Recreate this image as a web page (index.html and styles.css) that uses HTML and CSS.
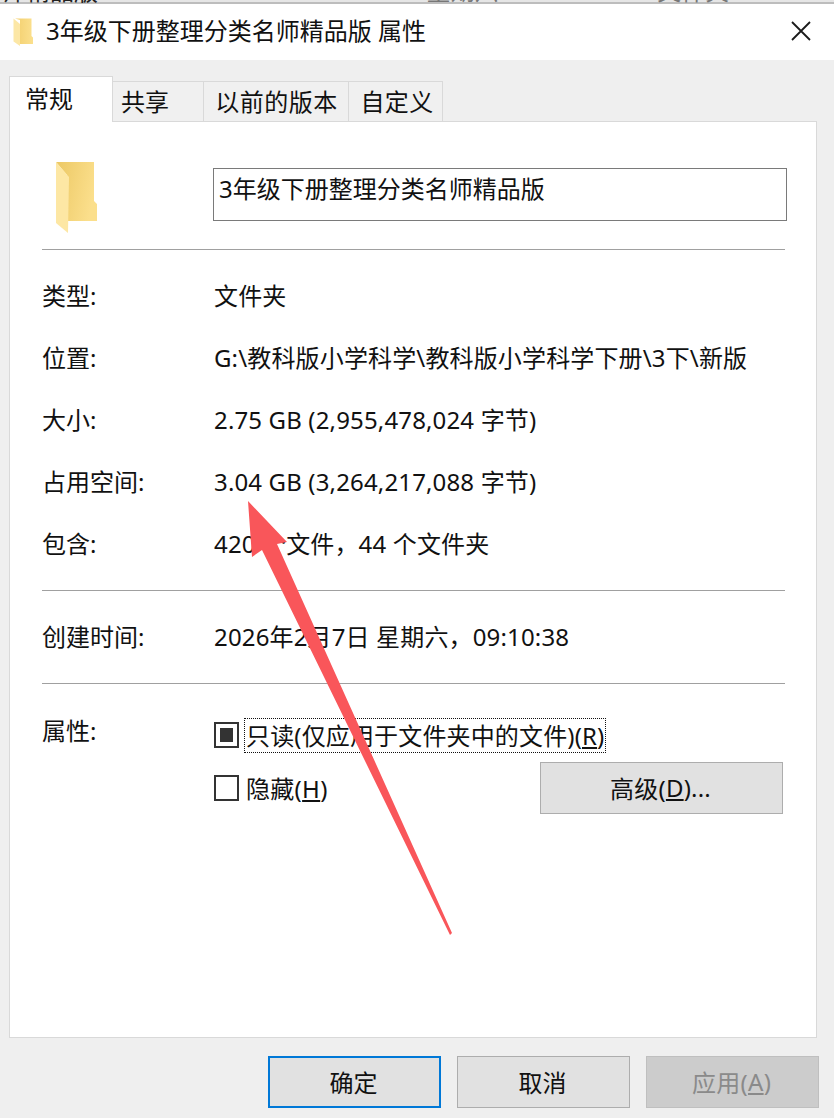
FILE: index.html
```html
<!DOCTYPE html>
<html lang="zh-CN">
<head>
<meta charset="utf-8">
<title>3年级下册整理分类名师精品版 属性</title>
<link rel="stylesheet" href="styles.css">
</head>
<body>
<div class="window">
  <div class="behind"><span class="behind-a">师精品版</span><span class="behind-b">2026/2/7 星期六 9:10</span><span class="behind-d">文件夹</span></div>
  <header class="titlebar">
    <svg class="title-icon" width="20" height="28" viewBox="0 0 40 56">
      <defs>
        <linearGradient id="b1" x1="0" y1="0" x2="1" y2="0"><stop offset="0" stop-color="#f3cf6e"/><stop offset="1" stop-color="#fbe08e"/></linearGradient>
      </defs>
      <path d="M4 1H37V36L40 39V52H14V4Z" fill="url(#b1)"/>
      <path d="M1 1L14 12V56L1 47Z" fill="#fce7a6"/>
    </svg>
    <span class="title-text">3年级下册整理分类名师精品版 属性</span>
    <svg class="close" width="20" height="20" viewBox="0 0 20 20"><path d="M1 1L19 19M19 1L1 19" stroke="#1a1a1a" stroke-width="1.8" fill="none"/></svg>
  </header>
  <main class="body">
    <nav class="tabs">
      <span class="tab tab-active">常规</span>
      <span class="tab tab-share">共享</span>
      <span class="tab tab-prev">以前的版本</span>
      <span class="tab tab-custom">自定义</span>
    </nav>
    <section class="panel">
      <div class="head">
        <svg class="big-folder" width="46" height="74" viewBox="0 0 46 74">
          <defs>
            <linearGradient id="b2" x1="0" y1="0" x2="1" y2="0.3"><stop offset="0" stop-color="#ecc864"/><stop offset="1" stop-color="#fbdf8c"/></linearGradient>
          </defs>
          <path d="M1 1H39V40L42 43V60H12V14Z" fill="url(#b2)"/>
          <path d="M1 1L14 16L13 72L1 62Z" fill="#fde7a4"/>
        </svg>
        <div class="name">3年级下册整理分类名师精品版</div>
      </div>
      <hr class="sep">
      <div class="rows">
        <div class="row"><span class="label">类型:</span><span class="value">文件夹</span></div>
        <div class="row"><span class="label">位置:</span><span class="value">G:\教科版小学科学\教科版小学科学下册\3下\新版</span></div>
        <div class="row"><span class="label">大小:</span><span class="value">2.75 GB (2,955,478,024 字节)</span></div>
        <div class="row"><span class="label">占用空间:</span><span class="value">3.04 GB (3,264,217,088 字节)</span></div>
        <div class="row"><span class="label">包含:</span><span class="value">420 个文件，44 个文件夹</span></div>
      </div>
      <hr class="sep sep-mid">
      <div class="row row-single"><span class="label">创建时间:</span><span class="value">2026年2月7日 星期六，09:10:38</span></div>
      <hr class="sep">
      <div class="attrs">
        <span class="label attr-label">属性:</span>
        <div class="attr-body">
          <div class="check-line">
            <span class="box box-mixed"></span>
            <span class="focus">只读(仅应用于文件夹中的文件)(<u>R</u>)</span>
          </div>
          <div class="check-line check-second">
            <span class="box"></span>
            <span class="check-text">隐藏(<u>H</u>)</span>
            <span class="btn btn-adv">高级(<u>D</u>)...</span>
          </div>
        </div>
      </div>
    </section>
    <footer class="actions">
      <span class="btn btn-foot btn-default">确定</span>
      <span class="btn btn-foot">取消</span>
      <span class="btn btn-foot btn-disabled">应用(<u>A</u>)</span>
    </footer>
  </main>
  <svg class="arrow" width="834" height="1118" viewBox="0 0 834 1118">
    <path d="M248 501L287 542L277 544L452 933L450 935L262 550L252 557Z" fill="#f9565a"/>
  </svg>
</div>
</body>
</html>
```
FILE: styles.css
```css
* { box-sizing: border-box; }
html, body { margin: 0; padding: 0; }
body {
  width: 834px;
  height: 1118px;
  overflow: hidden;
  background: #efefef;
  font-family: "Noto Sans", "Noto Sans CJK SC", sans-serif;
  font-size: 24px;
  color: #111;
}
.window { position: relative; width: 834px; height: 1118px; display: flex; flex-direction: column; }
.behind {
  height: 4px;
  background: linear-gradient(#e6e6e6 0, #e6e6e6 2px, #bdbdbd 2px, #bdbdbd 4px);
  overflow: hidden;
  display: flex;
  color: #777;
  white-space: nowrap;
}
.behind span { display: block; flex: none; height: 34px; line-height: 34px; margin-top: -26px; }
.behind-a { margin-left: 2px; color: #222; }
.behind-b { margin-left: 222px; }
.behind-d { margin-left: 105px; }
.titlebar {
  height: 56px;
  background: #fff;
  display: flex;
  align-items: center;
  padding-left: 13px;
}
.title-icon { flex: none; }
.title-text { margin-left: 13px; line-height: 54px; height: 56px; }
.close { margin-left: auto; margin-right: 23px; margin-bottom: 2px; }
.body { flex: 1; display: flex; flex-direction: column; padding: 16px 17px 0 9px; }
.tabs { display: flex; align-items: flex-end; height: 46px; position: relative; z-index: 1; }
.tab {
  height: 41px;
  border: 1px solid #d9d9d9;
  border-left: 0;
  background: #f0f0f0;
  display: flex;
  align-items: center;
  justify-content: center;
  padding-bottom: 2px;
}
.tab-active {
  height: 46px;
  width: 104px;
  background: #fff;
  border: 1px solid #d9d9d9;
  border-bottom: 0;
  padding-bottom: 4px;
  padding-right: 24px;
}
.tab-share { width: 91px; padding-right: 26px; }
.tab-prev { width: 145px; letter-spacing: 0.5px; padding-left: 1px; }
.tab-custom { width: 94px; letter-spacing: 0.4px; padding-left: 3px; }
.panel {
  height: 917px;
  background: #fff;
  border: 1px solid #d9d9d9;
  margin-top: -1px;
  padding: 0 31px 0 32px;
}
.head { height: 127px; display: flex; align-items: flex-start; padding: 39px 0 0 13px; }
.big-folder { flex: none; }
.name {
  flex: none;
  margin-left: 112px;
  width: 574px;
  height: 53px;
  margin-top: 7px;
  border: 1px solid #7a7a7a;
  padding: 0 5px;
  line-height: 40px;
}
.sep { margin: 0; border: 0; height: 1px; background: #a0a0a0; }
.rows { padding-top: 13px; }
.row { height: 62px; display: flex; align-items: center; }
.label { width: 172px; flex: none; }
.value { letter-spacing: 0.15px; white-space: nowrap; }
.sep-mid { margin-top: 17px; }
.row-single { height: 92px; padding-bottom: 4px; }
.attrs { display: flex; padding-top: 29px; }
.attr-label { line-height: 36px; }
.attr-body { flex: 1; }
.check-line { display: flex; align-items: center; height: 34px; margin-top: 5px; }
.check-second { margin-top: 19px; }
.box { width: 25px; height: 26px; border: 2px solid #333; flex: none; display: flex; align-items: center; justify-content: center; background: #fff; margin-right: 6px; }
.box-mixed::after { content: ""; width: 13px; height: 14px; background: #333; }
.focus { outline: 1px dotted #111; line-height: 33px; height: 33px; padding: 0 1px; white-space: nowrap; letter-spacing: 0.15px; }
.check-text { line-height: 33px; padding-left: 1px; letter-spacing: 0.3px; }
.btn {
  display: flex;
  align-items: center;
  justify-content: center;
  background: #e1e1e1;
  border: 1px solid #adadad;
  white-space: nowrap;
  height: 52px;
  padding-bottom: 2px;
}
.btn-adv { width: 243px; margin-left: auto; margin-right: 2px; padding-right: 2px; letter-spacing: 0.2px; flex: none; }
.actions { display: flex; gap: 16px; padding: 18px 0 0 259px; margin-right: -2px; }
.btn-foot { width: 173px; flex: none; padding-right: 2px; }
.btn-default { border: 2px solid #0078d7; }
.btn-disabled { background: #cccccc; border-color: #bfbfbf; color: #8a8a8a; letter-spacing: 0.3px; }
.arrow { position: absolute; left: 0; top: 0; pointer-events: none; }
```
